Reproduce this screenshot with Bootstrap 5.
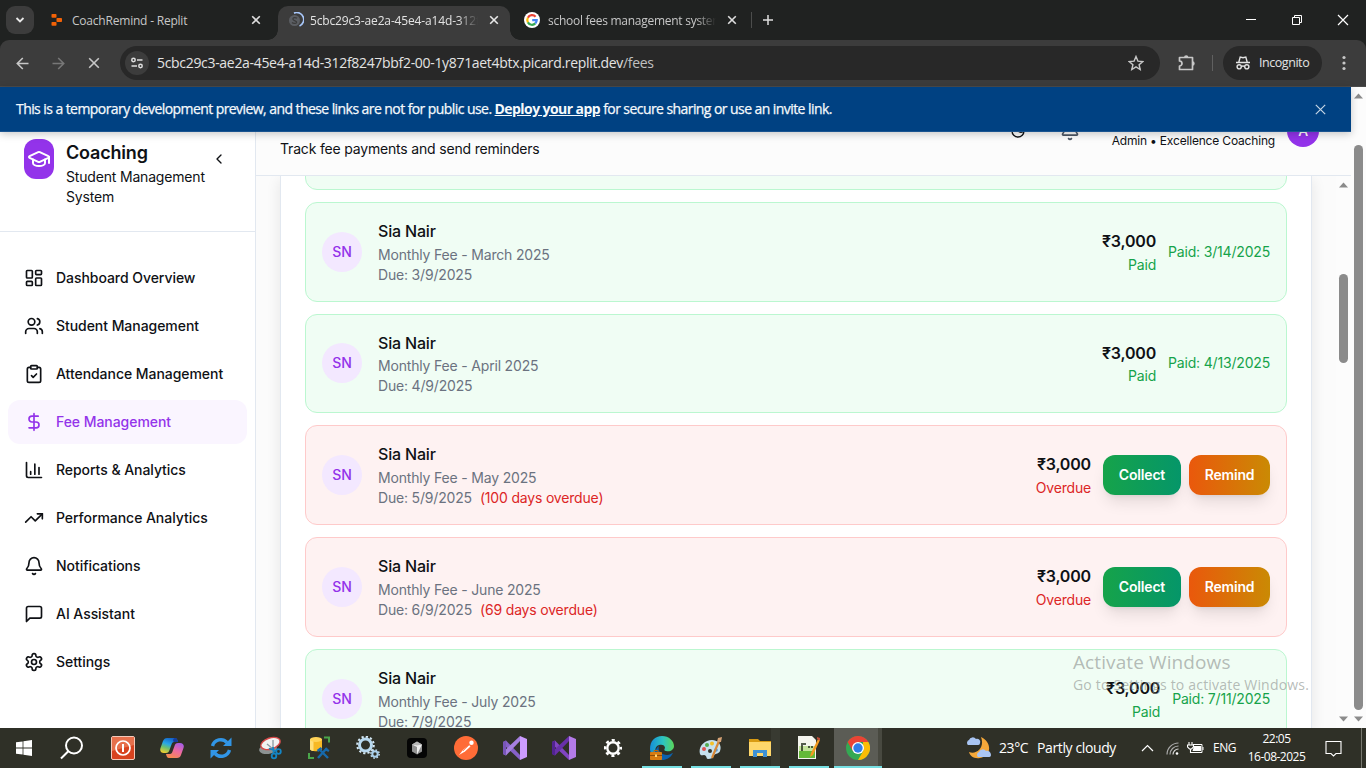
<!DOCTYPE html>
<html lang="en">
<head>
<meta charset="utf-8">
<title>Fee Management</title>
<link href="https://cdn.jsdelivr.net/npm/bootstrap@5.3.0/dist/css/bootstrap.min.css" rel="stylesheet">
<script src="https://cdn.jsdelivr.net/npm/bootstrap@5.3.0/dist/js/bootstrap.bundle.min.js"></script>
<style>
html,body{height:100%}
body{width:1366px;height:768px;overflow:hidden;font-family:"Inter",sans-serif;font-size:14px;line-height:20px;letter-spacing:-.18px;color:#0f1115;background:#fff}
svg{display:block;flex:none}
.sys{font-family:"Open Sans","Noto Sans",sans-serif;white-space:nowrap}
.line{fill:none;stroke:currentColor;stroke-linecap:round;stroke-linejoin:round;stroke-width:2}
/* browser frame */
.tabstrip{height:40px;background:#202221;color:#c7c7c7;font-size:12px}
.tab-menu{width:28px;height:28px;border-radius:9px;background:#3c3c3c;margin:6px 0 0 6px;color:#e8e8e8}
.btab{height:34px;margin-top:6px;padding-bottom:6px}
.btab span{position:relative;top:1px}
.btab.active{background:#3c3c3c;border-radius:10px 10px 0 0;color:#e3e3e3;position:relative}
.btab.active::before,.btab.active::after{content:"";position:absolute;bottom:0;width:10px;height:10px}
.btab.active::before{left:-10px;background:radial-gradient(circle at 0 0,transparent 9.5px,#3c3c3c 10px)}
.btab.active::after{right:-10px;background:radial-gradient(circle at 100% 0,transparent 9.5px,#3c3c3c 10px)}
.fade-end{-webkit-mask-image:linear-gradient(90deg,#000 calc(100% - 20px),transparent);mask-image:linear-gradient(90deg,#000 calc(100% - 20px),transparent)}
.toolbar-wrap{background:#202221;height:47px}
.toolbar{height:47px;background:#3c3c3c;border-bottom:1px solid #4b4b4b;border-radius:9px 9px 0 0;color:#c7c7c7}
.omni{width:1040px;height:34px;border-radius:17px;background:#282828;color:#e3e3e3;font-size:14px}
.omni-chip{width:24px;height:24px;border-radius:50%;background:#3c3c3c;margin-left:5px}
.incog{width:99px;height:34px;border-radius:17px;background:#282828;color:#e3e3e3;font-size:12.5px}
/* preview banner */
.banner{height:45px;background:#004182;border-bottom:1px solid #1a5490;color:#f5f9fc;font-size:14px;position:relative;z-index:3;box-shadow:0 2px 8px rgba(0,0,0,.22)}
.banner-text{margin-left:16px;letter-spacing:-.57px;-webkit-text-stroke:.25px #f5f9fc}
.banner-text b{-webkit-text-stroke:0}
.view{height:641px}
.main-col{width:1351px}
.side{width:256px;border-right:1px solid #e2e8f0;background:#fff}
.side-head{height:100px;border-bottom:1px solid #e2e8f0;padding:7px 24px 0}
.logo{width:30px;height:40px;border-radius:12px;background:#9333ea;color:#fff}
.brand{font-size:18px;line-height:28px;font-weight:600;letter-spacing:-.18px}
.menu{padding:24px 8px 0;gap:4px}
.menu a{height:44px;padding:0 16px;gap:12px;border-radius:12px;color:#0f1115;font-weight:500;letter-spacing:-.05px;text-decoration:none}
.menu a.on{background:#faf5ff;color:#9333ea}
.head{height:44px;background:#fcfcfc;border-bottom:1px solid #e2e8f0;padding:0 32px 0 24px}
.head-right{margin-top:-17px;height:32px}
.avatar{width:32px;height:32px;border-radius:50%;background:#9333ea;color:#fff;font-weight:500}
.pane{height:552px;background:#fbfbfb;overflow:hidden}
.panel{width:1032px;margin-left:24px;background:#fff;border:solid #e2e8f0;border-width:0 1px;padding:0 24px;box-shadow:0 4px 14px rgba(0,0,0,.09)}
.fee{height:99.75px;border:1px solid #bbf7d0;background:#f0fdf4;border-radius:12px;padding:0 16px;margin-bottom:12px;gap:16px}
.fee.late{background:#fef2f2;border-color:#fecaca}
.fee.stub{height:99.75px;margin-top:-86px}
.who{width:40px;height:40px;border-radius:50%;background:#f3e8ff;color:#9333ea;font-weight:500;letter-spacing:0}
.name{font-size:16px;line-height:24px;font-weight:500;margin-bottom:1.75px}
.sub{color:#6b7280}
.amt{font-size:16px;line-height:24px;font-weight:600;margin-bottom:1.75px}
.ok{color:#16a34a}.bad{color:#dc2626}
.act{height:40px;border:0;border-radius:12px;color:#fff;font-size:14px;font-weight:600;letter-spacing:-.18px;padding:0;box-shadow:0 10px 15px -3px rgba(0,0,0,.1),0 4px 6px -4px rgba(0,0,0,.1)}
.collect{width:78px;background:linear-gradient(90deg,#16a34a,#059669)}
.remind{width:81px;background:linear-gradient(90deg,#ea580c,#ca8a04)}
.sbar{width:15px;background:#fcfcfc;color:#8b8b8b}
.thumb{width:9px;border-radius:5px;background:#8b8b8b}
.watermark{position:absolute;left:1073px;top:650px;z-index:5;color:rgba(140,145,142,.62);pointer-events:none}
/* taskbar */
.taskbar{height:40px;background:#2f3027;color:#fff;font-size:12px}
.tb{width:49px;height:40px;border-bottom:2px solid transparent;padding-top:2px}
.run{width:40px;height:40px;margin:0 4.5px;border-bottom:2px solid #76dfe2;padding-top:2px}
.run.cur{width:48px;margin:0 0 0 1px;background:linear-gradient(90deg,#5b5c55 44px,#484940 44px)}
</style>
</head>
<body class="d-flex flex-column">

<div class="tabstrip sys d-flex">
  <div class="tab-menu d-flex align-items-center justify-content-center"><svg width="10" height="10" viewBox="0 0 10 10"><path d="M1.500 3 5 6.500 8.500 3" fill="none" stroke="currentColor" stroke-width="1.800"/></svg></div>
  <div class="btab d-flex align-items-center" style="width:244px;padding-left:17px">
    <svg width="12" height="14" viewBox="0 0 12 14" fill="#f26207"><rect x=".5" y="1" width="5" height="3.800" rx=".8"/><rect x="5.500" y="5" width="5.500" height="4" rx=".8"/><rect x=".5" y="9" width="5" height="3.800" rx=".8"/></svg>
    <span style="margin-left:9px;width:179px;letter-spacing:-.21px">CoachRemind - Replit</span>
    <svg width="10" height="10" viewBox="0 0 10 10"><path d="M1.200 1.200 8.800 8.800M8.800 1.200 1.200 8.800" stroke="#dedede" stroke-width="1.600"/></svg>
  </div>
  <div class="btab active d-flex align-items-center" style="width:232px;padding-left:10px">
    <svg width="16" height="16" viewBox="0 0 16 16"><circle cx="6.500" cy="8.500" r="5.500" fill="#5b5e63"/><path d="M9 6.300C7.500 5 4.500 5.500 5 7.300S9 8.600 8.600 10.300 5 11.600 4 10.500" fill="none" stroke="#3c3c3c" stroke-width="1.300"/><path d="M6 1.100A7 7 0 0 1 11.500 14" fill="none" stroke="#a8c7fa" stroke-width="1.700"/></svg>
    <span class="fade-end overflow-hidden" style="margin-left:6px;width:168px;letter-spacing:-.15px">5cbc29c3-ae2a-45e4-a14d-312f8247</span>
    <svg class="ms-auto" style="margin-right:11px" width="10" height="10" viewBox="0 0 10 10"><path d="M1.200 1.200 8.800 8.800M8.800 1.200 1.200 8.800" stroke="#e8e8e8" stroke-width="1.600"/></svg>
  </div>
  <div class="btab d-flex align-items-center" style="width:241px;padding-left:14px">
    <svg width="16" height="16" viewBox="0 0 16 16"><circle cx="8" cy="8" r="8" fill="#fff"/><g fill="none" stroke-width="2.200"><path d="M11.600 4.700A4.700 4.700 0 0 0 3.900 5.700" stroke="#ea4335"/><path d="M3.900 5.700a4.700 4.700 0 0 0 0 4.700" stroke="#fbbc05"/><path d="M3.900 10.400A4.700 4.700 0 0 0 11.300 11.400" stroke="#34a853"/><path d="M11.300 11.400A4.700 4.700 0 0 0 12.700 8.200H8.200" stroke="#4285f4"/></g></svg>
    <span class="fade-end overflow-hidden" style="margin-left:8px;width:168px;letter-spacing:-.27px">school fees management system</span>
    <svg style="margin-left:11px" width="10" height="10" viewBox="0 0 10 10"><path d="M1.200 1.200 8.800 8.800M8.800 1.200 1.200 8.800" stroke="#dedede" stroke-width="1.600"/></svg>
  </div>
  <div class="d-flex align-items-center"><div style="width:1px;height:16px;background:#4c4d4c"></div>
    <svg style="margin-left:10px" width="12" height="12" viewBox="0 0 12 12"><path d="M6 1v10M1 6h10" stroke="#dedede" stroke-width="1.500"/></svg></div>
  <div class="d-flex align-items-center ms-auto text-white" style="gap:34px;margin-right:17px">
    <svg width="12" height="12" viewBox="0 0 12 12"><path d="M1 5.500h10" stroke="currentColor"/></svg>
    <svg width="12" height="12" viewBox="0 0 12 12"><path d="M1.500 3.500h7v7h-7zM3.500 3.500v-2h7v7h-2" fill="none" stroke="currentColor"/></svg>
    <svg width="12" height="12" viewBox="0 0 12 12"><path d="m1 1 10 10M11 1 1 11" stroke="currentColor" stroke-width="1.200"/></svg>
  </div>
</div>

<div class="toolbar-wrap"><div class="toolbar sys d-flex align-items-center">
  <svg style="margin-left:16px" width="13" height="13" viewBox="0 0 13 13"><path d="M12.500 6.500H1.500M6.800 1 1.300 6.500 6.800 12" fill="none" stroke="currentColor" stroke-width="1.600"/></svg>
  <svg style="margin-left:23px" width="13" height="13" viewBox="0 0 13 13"><path d="M.5 6.500h11M6.200 1l5.500 5.500L6.200 12" fill="none" stroke="#777" stroke-width="1.600"/></svg>
  <svg style="margin-left:23px" width="12" height="12" viewBox="0 0 12 12"><path d="m1.200 1.200 9.600 9.600M10.800 1.200 1.200 10.800" stroke="currentColor" stroke-width="1.600"/></svg>
  <div class="omni d-flex align-items-center" style="margin-left:20px">
    <div class="omni-chip d-flex align-items-center justify-content-center"><svg width="14" height="14" viewBox="0 0 14 14" fill="none" stroke="#dedede" stroke-width="1.500"><circle cx="3.500" cy="4" r="1.700"/><path d="M7 4h5.500M1.500 10H7"/><circle cx="10.500" cy="10" r="1.700"/></svg></div>
    <span style="margin-left:8px;letter-spacing:-.315px">5cbc29c3-ae2a-45e4-a14d-312f8247bbf2-00-1y871aet4btx.picard.replit.dev<span style="color:#c0c0c0">/fees</span></span>
    <svg class="ms-auto" style="margin-right:16px" width="16" height="16" viewBox="0 0 16 16"><path d="m8 1.500 1.900 4.600 4.900.4-3.700 3.200 1.100 4.800L8 11.900l-4.200 2.600 1.100-4.800L1.200 6.500l4.900-.4z" fill="none" stroke="#c7c7c7" stroke-width="1.400"/></svg>
  </div>
  <svg style="margin-left:18px" width="18" height="18" viewBox="0 0 18 18"><path d="M1.500 3.500H14.500v12H1.500V12a2.300 2.300 0 0 0 0-5z" fill="none" stroke="currentColor" stroke-width="1.700" stroke-linejoin="round"/><path d="M6 3.500a2.200 2.200 0 0 1 4.400 0zM14.500 7.300a2.200 2.200 0 0 1 0 4.400z" fill="currentColor"/></svg>
  <div style="width:1px;height:16px;background:#606060;margin:0 10px 0 16px"></div>
  <div class="incog d-flex align-items-center">
    <svg style="margin-left:12px" width="16" height="16" viewBox="0 0 16 16" fill="none" stroke="currentColor" stroke-width="1.400"><path d="M1 7.500h14M3.700 7.500 5.200 2l2.800.7L10.800 2l1.500 5.500"/><circle cx="4.200" cy="11.800" r="2.100"/><circle cx="11.800" cy="11.800" r="2.100"/><path d="M6.300 11.500q1.700-.9 3.400 0"/></svg>
    <span style="margin-left:8px;letter-spacing:-.45px">Incognito</span></div>
  <svg style="margin-left:20px" width="4" height="16" viewBox="0 0 4 16" fill="currentColor"><circle cx="2" cy="2.500" r="1.600"/><circle cx="2" cy="8" r="1.600"/><circle cx="2" cy="13.500" r="1.600"/></svg>
</div></div>

<div class="view d-flex">
  <div class="main-col d-flex flex-column">
    <div class="banner sys d-flex align-items-center justify-content-between">
      <span class="banner-text">This is a temporary development preview, and these links are not for public use. <b class="text-decoration-underline">Deploy your app</b> for secure sharing or use an invite link.</span>
      <svg style="margin-right:25px" width="11" height="11" viewBox="0 0 11 11"><path d="m.8.800 9.400 9.400M10.200.800.800 10.200" stroke="#c5d5e5" stroke-width="1.200"/></svg>
    </div>
    <div class="d-flex flex-grow-1">
      <aside class="side">
        <div class="side-head d-flex align-items-start">
          <div class="logo d-flex align-items-center justify-content-center"><svg class="line" width="24" height="24" viewBox="0 0 24 24"><path d="M21.420 10.922a1 1 0 0 0-.019-1.838L12.830 5.180a2 2 0 0 0-1.660 0L2.600 9.080a1 1 0 0 0 0 1.832l8.570 3.908a2 2 0 0 0 1.660 0z"/><path d="M22 10v6"/><path d="M6 12.500V16a6 3 0 0 0 12 0v-3.500"/></svg></div>
          <div style="margin-left:12px;width:141px"><div class="brand">Coaching</div><div>Student Management System</div></div>
          <svg class="line" style="margin:12px 0 0 4px" width="16" height="16" viewBox="0 0 24 24"><path d="m15 18-6-6 6-6"/></svg>
        </div>
        <nav class="menu d-flex flex-column">
          <a href="#" class="d-flex align-items-center"><svg class="line" width="20" height="20" viewBox="0 0 24 24"><rect width="7" height="9" x="3" y="3" rx="1"/><rect width="7" height="5" x="14" y="3" rx="1"/><rect width="7" height="9" x="14" y="12" rx="1"/><rect width="7" height="5" x="3" y="16" rx="1"/></svg>Dashboard Overview</a>
          <a href="#" class="d-flex align-items-center"><svg class="line" width="20" height="20" viewBox="0 0 24 24"><path d="M16 21v-2a4 4 0 0 0-4-4H6a4 4 0 0 0-4 4v2"/><circle cx="9" cy="7" r="4"/><path d="M22 21v-2a4 4 0 0 0-3-3.870M16 3.130a4 4 0 0 1 0 7.750"/></svg>Student Management</a>
          <a href="#" class="d-flex align-items-center"><svg class="line" width="20" height="20" viewBox="0 0 24 24"><rect width="8" height="4" x="8" y="2" rx="1"/><path d="M16 4h2a2 2 0 0 1 2 2v14a2 2 0 0 1-2 2H6a2 2 0 0 1-2-2V6a2 2 0 0 1 2-2h2"/><path d="m9 14 2 2 4-4"/></svg>Attendance Management</a>
          <a href="#" class="on d-flex align-items-center"><svg class="line" width="20" height="20" viewBox="0 0 24 24"><path d="M12 2v20M17 5H9.500a3.500 3.500 0 0 0 0 7h5a3.500 3.500 0 0 1 0 7H6"/></svg>Fee Management</a>
          <a href="#" class="d-flex align-items-center"><svg class="line" width="20" height="20" viewBox="0 0 24 24"><path d="M3 3v16a2 2 0 0 0 2 2h16M18 17V9M13 17V5M8 17v-3"/></svg>Reports &amp; Analytics</a>
          <a href="#" class="d-flex align-items-center"><svg class="line" width="20" height="20" viewBox="0 0 24 24"><path d="m22 7-8.500 8.500-5-5L2 17"/><path d="M16 7h6v6"/></svg>Performance Analytics</a>
          <a href="#" class="d-flex align-items-center"><svg class="line" width="20" height="20" viewBox="0 0 24 24"><path d="M10.268 21a2 2 0 0 0 3.464 0M3.262 15.326A1 1 0 0 0 4 17h16a1 1 0 0 0 .74-1.673C19.410 13.956 18 12.499 18 8A6 6 0 0 0 6 8c0 4.499-1.411 5.956-2.738 7.326"/></svg>Notifications</a>
          <a href="#" class="d-flex align-items-center"><svg class="line" width="20" height="20" viewBox="0 0 24 24"><path d="M21 15a2 2 0 0 1-2 2H7l-4 4V5a2 2 0 0 1 2-2h14a2 2 0 0 1 2 2z"/></svg>AI Assistant</a>
          <a href="#" class="d-flex align-items-center"><svg class="line" width="20" height="20" viewBox="0 0 24 24"><path d="M12.220 2h-.44a2 2 0 0 0-2 2v.18a2 2 0 0 1-1 1.730l-.43.25a2 2 0 0 1-2 0l-.15-.08a2 2 0 0 0-2.730.73l-.22.38a2 2 0 0 0 .73 2.730l.15.1a2 2 0 0 1 1 1.720v.51a2 2 0 0 1-1 1.740l-.15.09a2 2 0 0 0-.73 2.730l.22.38a2 2 0 0 0 2.730.73l.15-.08a2 2 0 0 1 2 0l.43.25a2 2 0 0 1 1 1.730V20a2 2 0 0 0 2 2h.44a2 2 0 0 0 2-2v-.18a2 2 0 0 1 1-1.730l.43-.25a2 2 0 0 1 2 0l.15.08a2 2 0 0 0 2.730-.73l.22-.39a2 2 0 0 0-.73-2.730l-.15-.08a2 2 0 0 1-1-1.740v-.5a2 2 0 0 1 1-1.740l.15-.09a2 2 0 0 0 .73-2.730l-.22-.38a2 2 0 0 0-2.730-.73l-.15.08a2 2 0 0 1-2 0l-.43-.25a2 2 0 0 1-1-1.730V4a2 2 0 0 0-2-2z"/><circle cx="12" cy="12" r="3"/></svg>Settings</a>
        </nav>
      </aside>
      <div class="flex-grow-1">
        <header class="head d-flex justify-content-between align-items-start">
          <div style="margin-top:7px">Track fee payments and send reminders</div>
          <div class="head-right d-flex align-items-start">
            <svg class="line" style="margin-top:8px" width="16" height="16" viewBox="0 0 24 24"><path d="M12 3a6 6 0 0 0 9 9 9 9 0 1 1-9-9Z"/></svg>
            <svg class="line" style="margin:6px 0 0 34px;color:#4b5563" width="20" height="20" viewBox="0 0 24 24"><path d="M10.268 21a2 2 0 0 0 3.464 0M3.262 15.326A1 1 0 0 0 4 17h16a1 1 0 0 0 .74-1.673C19.410 13.956 18 12.499 18 8A6 6 0 0 0 6 8c0 4.499-1.411 5.956-2.738 7.326"/></svg>
            <div style="font-size:12px;line-height:16px;margin:18px 12px 0 32px">Admin • Excellence Coaching</div>
            <div class="avatar d-flex align-items-center justify-content-center">A</div>
          </div>
        </header>
        <div class="pane d-flex justify-content-between">
          <div class="panel">
            <div class="fee stub"></div>
            <div class="fee d-flex align-items-center"><div class="who d-flex align-items-center justify-content-center">SN</div><div><div class="name">Sia Nair</div><div class="sub">Monthly Fee - March 2025</div><div class="sub">Due: 3/9/2025</div></div>
              <div class="ms-auto d-flex align-items-center" style="gap:12px"><div class="text-end"><div class="amt">₹3,000</div><div class="ok">Paid</div></div><div class="ok">Paid: 3/14/2025</div></div></div>
            <div class="fee d-flex align-items-center"><div class="who d-flex align-items-center justify-content-center">SN</div><div><div class="name">Sia Nair</div><div class="sub">Monthly Fee - April 2025</div><div class="sub">Due: 4/9/2025</div></div>
              <div class="ms-auto d-flex align-items-center" style="gap:12px"><div class="text-end"><div class="amt">₹3,000</div><div class="ok">Paid</div></div><div class="ok">Paid: 4/13/2025</div></div></div>
            <div class="fee late d-flex align-items-center"><div class="who d-flex align-items-center justify-content-center">SN</div><div><div class="name">Sia Nair</div><div class="sub">Monthly Fee - May 2025</div><div class="sub">Due: 5/9/2025<span class="bad ms-2">(100 days overdue)</span></div></div>
              <div class="ms-auto d-flex align-items-center" style="gap:12px"><div class="text-end"><div class="amt">₹3,000</div><div class="bad">Overdue</div></div><div class="d-flex gap-2"><button class="act collect">Collect</button><button class="act remind">Remind</button></div></div></div>
            <div class="fee late d-flex align-items-center"><div class="who d-flex align-items-center justify-content-center">SN</div><div><div class="name">Sia Nair</div><div class="sub">Monthly Fee - June 2025</div><div class="sub">Due: 6/9/2025<span class="bad ms-2">(69 days overdue)</span></div></div>
              <div class="ms-auto d-flex align-items-center" style="gap:12px"><div class="text-end"><div class="amt">₹3,000</div><div class="bad">Overdue</div></div><div class="d-flex gap-2"><button class="act collect">Collect</button><button class="act remind">Remind</button></div></div></div>
            <div class="fee d-flex align-items-center"><div class="who d-flex align-items-center justify-content-center">SN</div><div><div class="name">Sia Nair</div><div class="sub">Monthly Fee - July 2025</div><div class="sub">Due: 7/9/2025</div></div>
              <div class="ms-auto d-flex align-items-center" style="gap:12px"><div class="text-end"><div class="amt">₹3,000</div><div class="ok">Paid</div></div><div class="ok">Paid: 7/11/2025</div></div></div>
          </div>
          <div class="sbar d-flex flex-column align-items-center"><svg style="margin-top:6px" width="9" height="6" viewBox="0 0 9 6"><path d="M0 5.500 4.500.5 9 5.500z" fill="currentColor"/></svg><div class="thumb" style="height:89px;margin-top:86px"></div><svg class="mt-auto" style="margin-bottom:6px" width="9" height="6" viewBox="0 0 9 6"><path d="M0 .5 4.500 5.500 9 .5z" fill="currentColor"/></svg></div>
        </div>
      </div>
    </div>
  </div>
  <div class="sbar d-flex flex-column align-items-center"><svg style="margin-top:6px" width="9" height="6" viewBox="0 0 9 6"><path d="M0 5.500 4.500.5 9 5.500z" fill="currentColor"/></svg><div class="thumb" style="height:565px;margin-top:46px"></div><svg class="mt-auto" style="margin-bottom:6px" width="9" height="6" viewBox="0 0 9 6"><path d="M0 .5 4.500 5.500 9 .5z" fill="currentColor"/></svg></div>
</div>

<div class="watermark sys"><div style="font-size:19px;line-height:24px;letter-spacing:.1px">Activate Windows</div><div style="font-size:14px;line-height:22px;letter-spacing:.19px">Go to Settings to activate Windows.</div></div>

<div class="taskbar sys d-flex align-items-center">
  <div class="tb d-flex align-items-center justify-content-center" style="width:48px"><svg width="16" height="16" viewBox="0 0 16 16" fill="#fff"><path d="M0 2.300 6.600 1.400V7.600H0zM7.400 1.300 16 0V7.600H7.400zM0 8.400H6.600V14.600L0 13.700zM7.400 8.400H16V16L7.400 14.700z"/></svg></div>
  <div class="tb d-flex align-items-center justify-content-center" style="width:48px"><svg width="24" height="24" viewBox="0 0 24 24" fill="none" stroke="#fff" stroke-width="2"><circle cx="14" cy="9.500" r="8"/><path d="M8.300 15.200 1 22.500"/></svg></div>
  <div class="tb d-flex align-items-center justify-content-center" style="width:51px;padding-left:2px"><svg width="24" height="24" viewBox="0 0 24 24"><rect x=".5" y=".5" width="23" height="23" rx="1.500" fill="#d8431f" stroke="#f3c9b9"/><path d="M1 1h22v8L1 15z" fill="#e6704c"/><circle cx="12" cy="12" r="7" fill="none" stroke="#fff" stroke-width="1.700"/><path d="M12 8v8" stroke="#fff" stroke-width="2"/></svg></div>
  <div class="tb d-flex align-items-center justify-content-center"><svg width="24" height="24" viewBox="0 0 24 24"><defs><linearGradient id="c1" x1=".6" y1="0" x2=".2" y2="1"><stop stop-color="#1464c8"/><stop offset=".4" stop-color="#28a6e8"/><stop offset=".65" stop-color="#6cc070"/><stop offset="1" stop-color="#f6cf2c"/></linearGradient><linearGradient id="c2" x1=".8" y1="0" x2=".3" y2="1"><stop stop-color="#a45ce8"/><stop offset=".5" stop-color="#ee6a9f"/><stop offset="1" stop-color="#f78a4e"/></linearGradient></defs><path d="M7 2h8c2 0 2.500 2 3 4h-4c-1.500 0-2 1-2.500 2.500L9.500 14c-.6 2-1.500 3-3.500 3H4c-3 0-4.500-2-3.500-5L3 5C4 3 5 2 7 2z" fill="url(#c1)"/><path d="M17 22H9c-2 0-2.500-2-3-4h4c1.500 0 2-1 2.500-2.500L14.500 10c.6-2 1.500-3 3.500-3h2c3 0 4.500 2 3.500 5L21 19c-.5 2-2 3-4 3z" fill="url(#c2)"/><path d="M15 2c2 0 2.500 2 3 4h-4c-1 0-1.500-4 1-4z" fill="#173b9c"/></svg></div>
  <div class="tb d-flex align-items-center justify-content-center"><svg width="22" height="22" viewBox="0 0 22 22"><g fill="none" stroke="#3195e6" stroke-width="3.400"><path d="M2.500 9A8.500 8.500 0 0 1 17 5.500"/><path d="M19.500 13A8.500 8.500 0 0 1 5 16.500"/></g><path d="M21.500.5V9H13zM.5 21.500V13H9z" fill="#3195e6"/></svg></div>
  <div class="tb d-flex align-items-center justify-content-center"><svg width="24" height="24" viewBox="0 0 24 24"><ellipse cx="10" cy="13" rx="9" ry="5" fill="#8c9292" transform="rotate(-8 10 13)"/><ellipse cx="12.500" cy="7.500" rx="10" ry="5.500" fill="#f2f3f3" stroke="#d84949" stroke-width="1.400" transform="rotate(-18 12.500 7.500)"/><path d="m9 8 6 5M15 4v8" stroke="#8d9aa0" stroke-width="1.300"/><g fill="none" stroke="#1485c4" stroke-width="1.800"><circle cx="16" cy="20" r="2.300"/><circle cx="20.500" cy="15.500" r="2.300"/><path d="M11 12.500 18.300 15M15 11l.8 6.500"/></g></svg></div>
  <div class="tb d-flex align-items-center justify-content-center"><svg width="24" height="24" viewBox="0 0 24 24"><path d="M3 3v10c0 3 12 3 12 0V3z" fill="#f7b924"/><path d="M3 3v10c0 1 2 2 3.500 2V3z" fill="#ffdf7a"/><ellipse cx="9" cy="3.500" rx="6" ry="2.500" fill="#ffd358"/><path d="M17 1.500h5v5M2 17v5h5" fill="none" stroke="#4aa54a" stroke-width="2"/><path d="m12 13 9 9M20 12l-9 10" stroke="#1769aa" stroke-width="2.400"/><path d="m10.500 15 4-3M18 13l4 2" stroke="#1769aa" stroke-width="2.500"/></svg></div>
  <div class="tb d-flex align-items-center justify-content-center"><svg width="24" height="24" viewBox="0 0 24 24" fill="none"><circle cx="9.500" cy="9" r="6" stroke="#b8d9f0" stroke-width="3"/><circle cx="9.500" cy="9" r="8.300" stroke="#d5e8f5" stroke-width="2" stroke-dasharray="2.200 2.150"/><circle cx="19" cy="18" r="2.700" stroke="#a8d0ec" stroke-width="2"/><circle cx="19" cy="18" r="4.200" stroke="#c2dff2" stroke-width="1.400" stroke-dasharray="1.600 1.700"/></svg></div>
  <div class="tb d-flex align-items-center justify-content-center"><svg width="20" height="20" viewBox="0 0 20 20"><rect width="20" height="20" rx="4" fill="#050505"/><path d="m10 3.500 5 3v7l-5 3-5-3v-7z" fill="#929292"/><path d="m5 6.500 5 .5 5-.5-5 10V9z" fill="#eee"/><path d="m5 6.500 5-3 5 3-5 1z" fill="#b8b8b8"/></svg></div>
  <div class="tb d-flex align-items-center justify-content-center"><svg width="24" height="24" viewBox="0 0 24 24"><circle cx="12" cy="12" r="12" fill="#ff6c37"/><path d="m5 19 4-5 6-5 1.500 1.500-5.500 5z" fill="#fff"/><circle cx="17.500" cy="6.800" r="2.200" fill="#fff"/><path d="m9 15 6-6" stroke="#ff6c37" stroke-width=".7"/></svg></div>
  <div class="tb d-flex align-items-center justify-content-center"><svg width="24" height="24" viewBox="0 0 24 24"><path d="m0 6 3-1.500L18 20l-1 4L1 9z" fill="#8660c8"/><path d="M0 18l3 1.500L18 4l-1-4L0 16z" fill="#a67fe0"/><path d="M0 6 3 4.500V19.500L0 18z" fill="#7855b8"/><path d="M17 0l7 3v18l-7 3z" fill="#cc9cff"/></svg></div>
  <div class="tb d-flex align-items-center justify-content-center"><svg width="24" height="24" viewBox="0 0 24 24"><path d="m0 6 3-1.500L18 20l-1 4L1 9z" fill="#8044c2"/><path d="M0 18l3 1.500L18 4l-1-4L1 15z" fill="#6930ab"/><path d="M17 0l7 3v18l-7 3z" fill="#b47be8"/><path d="M0 6 3 4.500V19.500L0 18z" fill="#512390"/></svg></div>
  <div class="tb d-flex align-items-center justify-content-center"><svg width="20" height="20" viewBox="0 0 20 20" fill="none" stroke="#fff"><circle cx="10" cy="10" r="5.700" stroke-width="2.400"/><circle cx="10" cy="10" r="7.900" stroke-width="2.300" stroke-dasharray="3.100 3.105" stroke-dashoffset="1.550"/></svg></div>
  <div class="run d-flex align-items-center justify-content-center"><svg width="24" height="24" viewBox="0 0 24 24"><defs><linearGradient id="eg"><stop stop-color="#168ed8"/><stop offset=".55" stop-color="#2dc5c0"/><stop offset="1" stop-color="#5bd65a"/></linearGradient></defs><path d="M0 13C0 5 5 0 12 0s12 5 12 10c0 4-4 6-8 5-2 0-2-2-1-3 0-3-3-4-6-3-5 1-5 9 1 14C4 22 0 18 0 13z" fill="url(#eg)"/><path d="M9 10c-2 5 3 9 8 9 3 0 5-2 6-2-3 6-8 7-11 7-7-1-9-10-3-14z" fill="#0c61ad"/><rect y="16" width="12" height="8" rx=".8" fill="#d77b10"/><path d="M0 19.500h12" stroke="#8f4b07"/><path d="M4 16v-1.500h4V16" fill="none" stroke="#b96509"/><rect x="5" y="18.500" width="2" height="2.500" fill="#ffd774"/></svg></div>
  <div class="run d-flex align-items-center justify-content-center"><svg width="24" height="24" viewBox="0 0 24 24"><path d="M1 18C-1 11 5 4 13 4c7 0 10 6 8 11-1 3-4 2-6 4-1 3-3 4-6 4-2 0-1-4-4-4-2 0-3 1-4-1z" fill="#c6e1ee"/><circle cx="5" cy="13" r="2" fill="#df5352"/><circle cx="8" cy="9" r="2" fill="#54ac50"/><circle cx="13" cy="7.500" r="2" fill="#f3c027"/><circle cx="11" cy="15" r="2" fill="#30332b"/><circle cx="17" cy="14" r="1.800" fill="#4a97da"/><path d="M13 22 20 5" stroke="#d78838" stroke-width="2.200"/><path d="m18 6 1-4 4-1-1 5z" fill="#d7a376"/></svg></div>
  <div class="run d-flex align-items-center justify-content-center" style="background:linear-gradient(90deg,transparent 31px,#383a31 31px)"><svg width="22" height="20" viewBox="0 0 22 20"><path d="M0 1h9l2 2h11v4H0z" fill="#d99b13"/><path d="M0 4h22v14H0z" fill="#ffd76b"/><path d="M4 12h14v7h-4v-4H8v4H4z" fill="#3f91d4"/></svg></div>
  <div class="run d-flex align-items-center justify-content-center"><svg width="24" height="24" viewBox="0 0 24 24"><path d="M1 0h14l4 4v19H1z" fill="#f5f5ee"/><path d="M2 12h16v10H2z" fill="#64b938"/><path d="M2 10h16v5H2z" fill="#c4e39b"/><path d="M5 7v8M6 8h3M11 11h2M14 11h2" stroke="#202b1a" stroke-width="1.500"/><path d="m21 3-7 14-1 4 3-2 7-15z" fill="#f29a20"/><path d="m20 1 3 1v3l-3-2z" fill="#c04d38"/></svg></div>
  <div class="run cur d-flex align-items-center justify-content-center"><svg width="24" height="24" viewBox="0 0 24 24"><circle cx="12" cy="12" r="12" fill="#34a853"/><path d="M1.600 6A12 12 0 0 1 22.400 6H12L6.800 15z" fill="#ea4335"/><path d="M22.400 6A12 12 0 0 1 12 24l5.200-9L17 6z" fill="#fbbc05"/><circle cx="12" cy="12" r="6" fill="#fff"/><circle cx="12" cy="12" r="4.700" fill="#2f7de9"/></svg></div>
  <div class="d-flex align-items-center ms-auto">
    <svg width="25" height="24" viewBox="0 0 25 24"><path d="M15 1c11 5 11 19-1 21-6 1-10-2-11-6 8 3 16-5 12-15z" fill="#f5a83a"/><path d="M2 9a3 3 0 0 1 1-5 4 4 0 0 1 7-1c3-1 5 2 4 4 0 2-2 2-2 2zM12 21a3 3 0 0 1 1-5 4 4 0 0 1 7-1c3-1 5 2 5 4s-2 2-2 2z" fill="#a9c5f3"/></svg>
    <span style="font-size:14px;margin-left:8px;width:38px;letter-spacing:-.4px">23°C</span><span style="font-size:14px;width:80px;letter-spacing:-.38px">Partly cloudy</span>
    <svg style="margin-left:24px" width="13" height="8" viewBox="0 0 13 8"><path d="M1 7 6.500 1.500 12 7" fill="none" stroke="#fff" stroke-width="1.200"/></svg>
    <svg style="margin-left:12px" width="13" height="13" viewBox="0 0 13 13" fill="none" stroke-width="1.200"><path d="M1 12.500A11.500 11.500 0 0 1 12.500 1M4 12.500A8.500 8.500 0 0 1 12.500 4" stroke="#aaa"/><path d="M7 12.500A5.500 5.500 0 0 1 12.500 7" stroke="#ddd"/><circle cx="11" cy="11.500" r="1.300" fill="#fff"/></svg>
    <svg style="margin-left:8px" width="17" height="12" viewBox="0 0 17 12"><path d="M6 2.500h9v8H6M16 5v3" fill="none" stroke="#fff"/><path d="M7 4h7v5H5.500z" fill="#fff"/><path d="M2 0v3M5 0v3M.5 3h6v2l-2 2h-2l-2-2zM3.500 7v3.500H6" fill="none" stroke="#fff" stroke-width="1.100"/></svg>
    <span style="margin-left:9px;width:22px;letter-spacing:-.5px">ENG</span>
    <div class="text-center" style="margin-left:11px;width:61px;line-height:18px"><div style="letter-spacing:-.5px">22:05</div><div style="letter-spacing:-.5px">16-08-2025</div></div>
    <svg style="margin-left:18px" width="17" height="17" viewBox="0 0 17 17"><path d="M1 1.500h15v12h-5L8.500 16 6 13.500H1z" fill="none" stroke="#fff" stroke-width="1.100"/></svg>
    <div style="width:1px;height:40px;background:#77786f;margin:0 14px 0 9px;transform:translateX(10px)"></div>
  </div>
</div>
</body>
</html>
